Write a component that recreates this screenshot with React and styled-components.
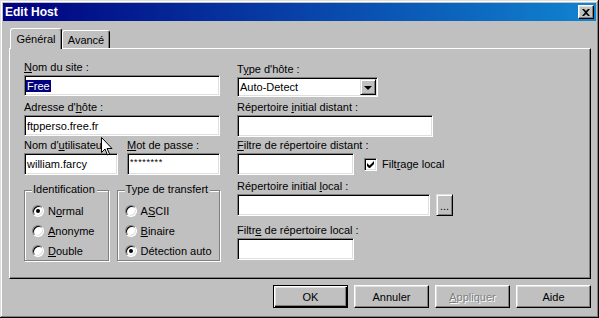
import React from "react";
import styled, { createGlobalStyle, css } from "styled-components";

const GlobalStyle = createGlobalStyle`
  html, body { margin: 0; padding: 0; background: #c0c0c0; }
  body {
    font-family: "Liberation Sans", Arial, sans-serif;
    font-size: 11px;
    color: #000;
  }
  * { box-sizing: border-box; }
`;

const Window = styled.div`
  position: relative;
  width: 599px;
  height: 318px;
  padding: 3px;
  background: #c0c0c0;
  box-shadow: inset -1px -1px #000, inset 1px 1px #dfdfdf,
    inset -2px -2px #808080, inset 2px 2px #fff;
  display: flex;
  flex-direction: column;
`;

const TitleBar = styled.div`
  height: 18px;
  flex: none;
  padding: 0 2px 0 2px;
  background: linear-gradient(90deg, #000080, #1084d0);
  color: #fff;
  font-size: 12px;
  font-weight: bold;
  display: flex;
  align-items: center;
  justify-content: space-between;
`;

const CloseButton = styled.div`
  width: 16px;
  height: 14px;
  background: #c0c0c0;
  border: 1px solid;
  border-color: #fff #000 #000 #fff;
  box-shadow: inset -1px -1px #808080, inset 1px 1px #dfdfdf;
  display: flex;
  align-items: center;
  justify-content: center;
`;

const Body = styled.div`
  flex: 1;
  padding: 7px 5px 0 6px;
  display: flex;
  flex-direction: column;
`;

const TabStrip = styled.div`
  height: 20px;
  padding-left: 1px;
  display: flex;
  align-items: flex-end;
  position: relative;
  z-index: 1;
`;

const Tab = styled.div`
  width: ${(p) => p.$w}px;
  height: ${(p) => (p.$active ? 21 : 18)}px;
  margin-bottom: ${(p) => (p.$active ? -1 : 0)}px;
  padding-top: ${(p) => (p.$active ? 0 : 1)}px;
  background: #c0c0c0;
  border-top: 1px solid #fff;
  border-left: 1px solid #fff;
  border-right: 1px solid #000;
  border-radius: 3px 3px 0 0;
  box-shadow: inset -1px 0 #808080;
  display: flex;
  align-items: center;
  justify-content: center;
`;

const Panel = styled.div`
  width: 582px;
  height: 231px;
  flex: none;
  padding: 12px 0 0 14px;
  border-top: 1px solid #fff;
  border-left: 1px solid #fff;
  border-right: 1px solid #000;
  border-bottom: 1px solid #000;
  box-shadow: inset -1px -1px #808080;
  display: flex;
`;

const Column = styled.div`
  width: ${(p) => p.$w}px;
  margin-left: ${(p) => p.$ml || 0}px;
  padding-top: ${(p) => p.$pt || 0}px;
  display: flex;
  flex-direction: column;
`;

const Field = styled.div`
  display: flex;
  flex-direction: column;
  margin-top: ${(p) => p.$mt || 0}px;
`;

const Row = styled.div`
  display: flex;
  align-items: ${(p) => p.$align || "flex-start"};
  gap: ${(p) => p.$gap || 0}px;
  margin-top: ${(p) => p.$mt || 0}px;
`;

const Label = styled.div`
  height: 13px;
  line-height: 13px;
  margin-bottom: 1px;
  white-space: nowrap;
`;

const TextBox = styled.div`
  width: ${(p) => p.$w}px;
  height: ${(p) => p.$h || 21}px;
  flex: none;
  padding: 0 1px 0 1px;
  background: #fff;
  border: 1px solid;
  border-color: #808080 #fff #fff #808080;
  box-shadow: inset 1px 1px #000, inset -1px -1px #dfdfdf;
  display: flex;
  align-items: center;
  white-space: nowrap;
  overflow: hidden;
  & > span { padding-left: 1px; }
`;

const Selected = styled.span`
  background: #000080;
  color: #fff;
  line-height: 12px;
  padding: 0 1px;
`;

const Masked = styled.span`
  font-size: 9px;
  letter-spacing: 0.6px;
  margin-top: -5px;
`;

const Combo = styled(TextBox)`
  padding-right: 1px;
  justify-content: space-between;
`;

const BevelButton = styled.div`
  width: ${(p) => p.$w}px;
  height: ${(p) => p.$h}px;
  flex: none;
  background: #c0c0c0;
  border: 1px solid;
  border-color: #dfdfdf #000 #000 #dfdfdf;
  box-shadow: inset 1px 1px #fff, inset -1px -1px #808080;
  display: flex;
  align-items: center;
  justify-content: center;
`;

const DotsButton = styled(BevelButton)`
  align-items: flex-end;
  padding-bottom: 3px;
  line-height: 11px;
`;

const Arrow = styled.span`
  width: 0;
  height: 0;
  border-left: 4px solid transparent;
  border-right: 4px solid transparent;
  border-top: 4px solid #000;
  margin-top: 1px;
`;

const CheckBox = styled.span`
  width: 13px;
  height: 13px;
  flex: none;
  background: #fff;
  border: 1px solid;
  border-color: #808080 #fff #fff #808080;
  box-shadow: inset 1px 1px #000, inset -1px -1px #dfdfdf;
  display: flex;
  align-items: center;
  justify-content: center;
`;

const Groups = styled.div`
  display: flex;
  gap: 8px;
  margin-top: 8px;
`;

const GroupBox = styled.fieldset`
  width: ${(p) => p.$w}px;
  height: 78px;
  margin: 0;
  padding: 4px 0 0 7px;
  min-width: 0;
  border: 1px solid #808080;
  box-shadow: inset 1px 1px #fff, 1px 1px #fff;
`;

const Legend = styled.legend`
  padding: 0 2px 1px 1px;
  line-height: 13px;
  background: #c0c0c0;
  white-space: nowrap;
`;

const Option = styled.div`
  height: 19px;
  margin-bottom: 1px;
  display: flex;
  align-items: center;
  gap: 4px;
  white-space: nowrap;
`;

const Radio = styled.span`
  width: 12px;
  height: 12px;
  flex: none;
  border-radius: 50%;
  background: #fff;
  border: 1px solid;
  border-color: #808080 #fff #fff #808080;
  box-shadow: inset 1px 1px #000, inset -1px -1px #dfdfdf;
  display: flex;
  align-items: center;
  justify-content: center;
  &::after {
    content: "";
    width: 4px;
    height: 4px;
    border-radius: 50%;
    background: #000;
    display: ${(p) => (p.$checked ? "block" : "none")};
  }
`;

const ButtonRow = styled.div`
  display: flex;
  justify-content: flex-end;
  gap: 6px;
  margin-top: 6px;
`;

const Button = styled.div`
  width: 75px;
  height: 23px;
  background: #c0c0c0;
  border: 1px solid;
  border-color: #fff #000 #000 #fff;
  box-shadow: inset -1px -1px #808080, inset 1px 1px #dfdfdf;
  display: flex;
  align-items: center;
  justify-content: center;
  ${(p) =>
    p.$default &&
    css`
      border-color: #000;
      box-shadow: inset 1px 1px #fff, inset -1px -1px #000,
        inset -2px -2px #808080, inset 2px 2px #dfdfdf;
    `}
  ${(p) =>
    p.$disabled &&
    css`
      color: #808080;
      text-shadow: 1px 1px #fff;
    `}
`;

const Cursor = styled.svg`
  position: absolute;
  left: 101px;
  top: 137px;
  pointer-events: none;
`;

function RadioOption({ checked, children }) {
  return (
    <Option>
      <Radio $checked={checked} />
      <span>{children}</span>
    </Option>
  );
}

export default function App() {
  return (
    <>
      <GlobalStyle />
      <Window>
        <TitleBar>
          <span>Edit Host</span>
          <CloseButton>
            <svg width="8" height="7" viewBox="0 0 8 7">
              <path d="M0 0h2l2 2 2-2h2L5 3.5 8 7H6L4 5 2 7H0l3-3.5z" fill="#000" />
            </svg>
          </CloseButton>
        </TitleBar>
        <Body>
          <TabStrip>
            <Tab $active $w={52}>Général</Tab>
            <Tab $w={48}>Avancé</Tab>
          </TabStrip>
          <Panel>
            <Column $w={196}>
              <Field>
                <Label><u>N</u>om du site :</Label>
                <TextBox $w={196}>
                  <Selected>Free</Selected>
                </TextBox>
              </Field>
              <Field $mt={5}>
                <Label>Adresse d'<u>h</u>ôte :</Label>
                <TextBox $w={196}><span>ftpperso.free.fr</span></TextBox>
              </Field>
              <Row $gap={9} $mt={3}>
                <Field>
                  <Label>Nom d'<u>u</u>tilisateur</Label>
                  <TextBox $w={94} $h={22}><span>william.farcy</span></TextBox>
                </Field>
                <Field>
                  <Label><u>M</u>ot de passe :</Label>
                  <TextBox $w={93} $h={22}><Masked>********</Masked></TextBox>
                </Field>
              </Row>
              <Groups>
                <GroupBox $w={85}>
                  <Legend>Identification</Legend>
                  <RadioOption checked>N<u>o</u>rmal</RadioOption>
                  <RadioOption><u>A</u>nonyme</RadioOption>
                  <RadioOption><u>D</u>ouble</RadioOption>
                </GroupBox>
                <GroupBox $w={104}>
                  <Legend>Type de transfert</Legend>
                  <RadioOption>A<u>S</u>CII</RadioOption>
                  <RadioOption><u>B</u>inaire</RadioOption>
                  <RadioOption checked>Détection auto</RadioOption>
                </GroupBox>
              </Groups>
            </Column>
            <Column $w={230} $ml={17} $pt={2}>
              <Field>
                <Label>T<u>y</u>pe d'hôte :</Label>
                <Combo $w={141} $h={20}>
                  <span>Auto-Detect</span>
                  <BevelButton $w={16} $h={16}>
                    <Arrow />
                  </BevelButton>
                </Combo>
              </Field>
              <Field $mt={4}>
                <Label>Répertoire <u>i</u>nitial distant :</Label>
                <TextBox $w={196} $h={22} />
              </Field>
              <Field $mt={2}>
                <Label><u>F</u>iltre de répertoire distant :</Label>
                <Row $align="center" $gap={10}>
                  <TextBox $w={117} $h={22} />
                  <Row $align="center" $gap={5}>
                    <CheckBox>
                      <svg width="7" height="7" viewBox="0 0 7 7">
                        <path d="M0 2v3l2 2h1l4-4V0L2.5 4.5z" fill="#000" />
                      </svg>
                    </CheckBox>
                    <span>Filt<u>r</u>age local</span>
                  </Row>
                </Row>
              </Field>
              <Field $mt={5}>
                <Label>Répertoire initial <u>l</u>ocal :</Label>
                <Row $gap={6}>
                  <TextBox $w={193} $h={22} />
                  <DotsButton $w={17} $h={22}>...</DotsButton>
                </Row>
              </Field>
              <Field $mt={8}>
                <Label>Filtr<u>e</u> de répertoire local :</Label>
                <TextBox $w={117} $h={22} />
              </Field>
            </Column>
          </Panel>
          <ButtonRow>
            <Button $default>OK</Button>
            <Button>Annuler</Button>
            <Button $disabled><u>A</u>ppliquer</Button>
            <Button>Aide</Button>
          </ButtonRow>
        </Body>
        <Cursor width="12" height="20" viewBox="0 0 12 20">
          <path d="M0.5 0.5v15l3.5-3.5 2.5 6 2-1-2.5-5.5h5z" fill="#fff" stroke="#000" strokeWidth="1" />
        </Cursor>
      </Window>
    </>
  );
}
